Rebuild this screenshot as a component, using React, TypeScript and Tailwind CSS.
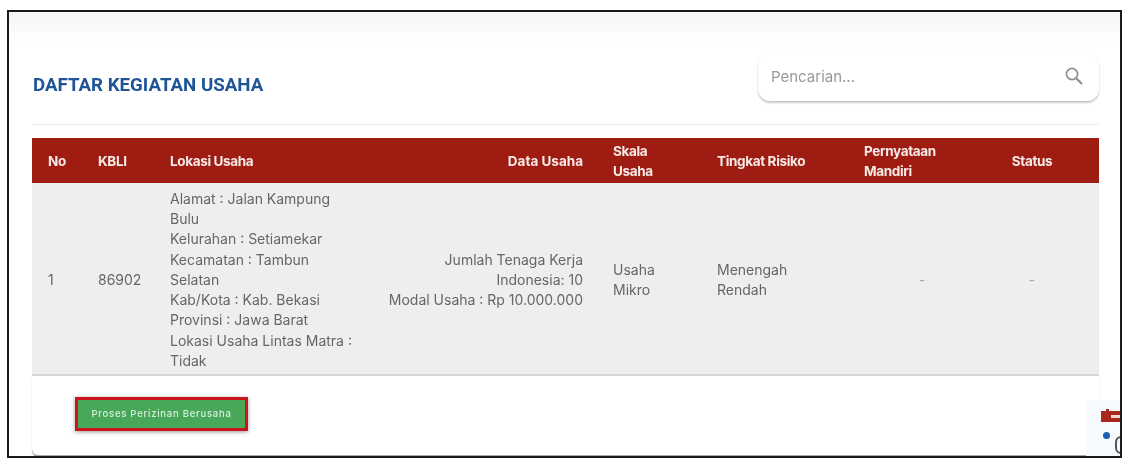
const font = "font-['Inter','Liberation_Sans',sans-serif]";

function SearchBox() {
    return (
        <div className="w-[341px] h-[48px] rounded-xl bg-white shadow-[0_2px_2px_rgba(0,0,0,0.22),0_0_2px_rgba(0,0,0,0.05)] flex items-center justify-between pl-[13px] pr-[15px]">
            <span className="text-[15px] text-[#999999]">Pencarian...</span>
            <svg className="w-[20px] h-[20px] text-[#8a8f94] -mt-[2px]" viewBox="0 0 20 20" fill="none" stroke="currentColor" strokeWidth="1.7">
                <circle cx="8" cy="8" r="5.6" />
                <path d="M12.2 12.2 L18 18" strokeWidth="2.2" />
            </svg>
        </div>
    );
}

const cols = "grid grid-cols-[50px_72px_205px_240px_102px_147px_148px_1fr]";

function TableHeader() {
    return (
        <div className={`${cols} h-[45px] items-center bg-[#9e1c12] text-[13.5px] leading-[20px] font-bold text-[#f7e9e6] tracking-[-0.35px]`}>
            <div className="pl-4">No</div>
            <div className="pl-4">KBLI</div>
            <div className="pl-4">Lokasi Usaha</div>
            <div className="pr-4 text-right tracking-normal">Data Usaha</div>
            <div className="pl-[14px] w-[70px]">Skala Usaha</div>
            <div className="pl-4">Tingkat Risiko</div>
            <div className="pl-4 w-[120px]">Pernyataan Mandiri</div>
            <div className="w-[72px] text-center">Status</div>
        </div>
    );
}

function TableRow() {
    return (
        <div className={`${cols} h-[193px] pt-[3px] items-center bg-[#eeeeee] text-[14px] leading-[20.25px] text-[#666666] border-b-2 border-[#d6d6d6]`}>
            <div className="pl-4">1</div>
            <div className="pl-4">86902</div>
            <div className="pl-4 pr-1">
                <div className="pr-4">Alamat : Jalan Kampung Bulu</div>
                <div>Kelurahan : Setiamekar</div>
                <div className="pr-4">Kecamatan : Tambun Selatan</div>
                <div>Kab/Kota : Kab. Bekasi</div>
                <div>Provinsi : Jawa Barat</div>
                <div>Lokasi Usaha Lintas Matra : Tidak</div>
            </div>
            <div className="pr-4 pl-6 text-right">
                <div>Jumlah Tenaga Kerja Indonesia: 10</div>
                <div>Modal Usaha : Rp 10.000.000</div>
            </div>
            <div className="pl-[14px] w-[70px]">Usaha Mikro</div>
            <div className="pl-4 w-[110px]">Menengah Rendah</div>
            <div className="text-center text-[#aaaaaa]">-</div>
            <div className="w-[72px] text-center text-[#aaaaaa]">-</div>
        </div>
    );
}

export default function App() {
    return (
        <div className={`${font} w-[1132px] h-[466px] bg-white pt-[10px] pb-2 pl-[7px] pr-[10px] overflow-hidden`}>
            <div className="relative h-full border-2 border-[#1a1a1a] bg-white overflow-hidden">
                <div className="h-[30px] bg-gradient-to-b from-[#f6f6f6] to-white" />
                <div className="pl-[23px] pr-[21px] blur-[0.4px]">
                    <div className="flex items-center justify-between h-[83px] border-b border-[#ececec]">
                        <h1 className="font-['Roboto',sans-serif] text-[18.7px] font-bold text-[#1f5597] ml-px mt-[5px]">DAFTAR KEGIATAN USAHA</h1>
                        <div className="mt-[-12px]"><SearchBox /></div>
                    </div>
                    <div className="mt-[13px]">
                        <TableHeader />
                        <TableRow />
                    </div>
                    <div className="h-[79px] rounded-b-md bg-white shadow-[0_2px_1px_rgba(0,0,0,0.35)] pl-[43px] pt-[21px]">
                        <button className="w-[173px] h-[34px] border-[3px] border-[#c9161d] bg-[#48a85a] text-[9.5px] font-medium tracking-[0.75px] text-[#d9efdc] shadow-[0_1px_4px_rgba(0,0,0,0.4)]">
                            Proses Perizinan Berusaha
                        </button>
                    </div>
                </div>
                <div className="absolute right-0 bottom-0 w-[34px] h-[56px] bg-[#f6fafd] blur-[0.5px]">
                    <div className="absolute left-[20px] top-[9px] w-[3px] h-[3px] bg-[#a8281c]" />
                    <div className="absolute left-[15px] top-[11px] w-[19px] h-[11px] bg-[#a8281c]">
                        <div className="mt-[4px] ml-[10px] h-[3px] bg-[#f2d8d4]" />
                    </div>
                    <div className="absolute left-[17px] top-[32px] w-[7px] h-[7px] rounded-sm bg-[#1d5fb4]" />
                    <div className="absolute left-[29px] top-[36px] w-[12px] h-[18px] rounded-full border-2 border-[#555555]" />
                </div>
            </div>
        </div>
    );
}
